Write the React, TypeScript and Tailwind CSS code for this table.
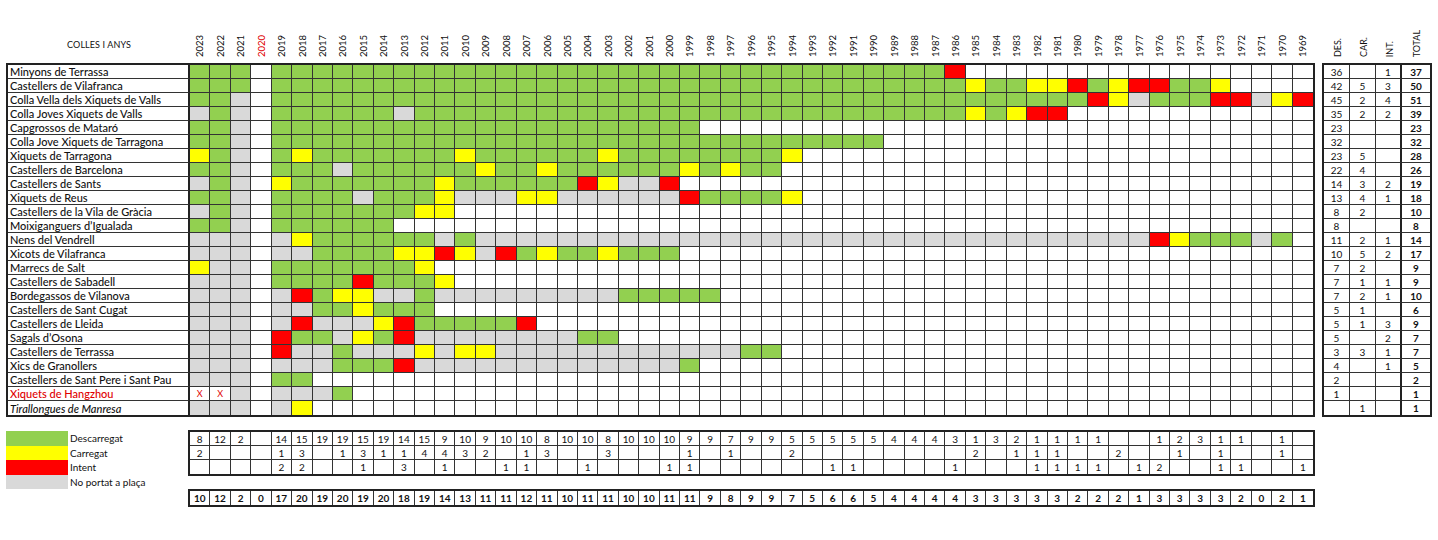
const YEARS = Array.from({ length: 55 }, (_, i) => 2023 - i);

const FILL: Record<string, string> = {
  G: "bg-[#92d050]",
  Y: "bg-[#ffff00]",
  R: "bg-[#ff0000]",
  S: "bg-[#d9d9d9]",
  W: "bg-white",
  X: "bg-white",
};

type Val = number | "";

type Colla = {
  name: string;
  cells: string;
  stats: Val[];
  nameClass?: string;
};

// one letter per year, 2023 -> 1969, grouped by five
const row = (s: string) => s.replace(/ /g, "").padEnd(55, "W");

const colles: Colla[] = [
  { name: "Minyons de Terrassa", cells: row("GGGWG GGGGG GGGGG GGGGG GGGGG GGGGG GGGGG GGRWW"), stats: [36, "", 1, 37] },
  { name: "Castellers de Vilafranca", cells: row("GGGWG GGGGG GGGGG GGGGG GGGGG GGGGG GGGGG GGGYG GYYRG YRRGG YWWWW"), stats: [42, 5, 3, 50] },
  { name: "Colla Vella dels Xiquets de Valls", cells: row("GGSWG GGGGG GGGGG GGGGG GGGGG GGGGG GGGGG GGGGG GGGGR YSGGG RRSYR"), stats: [45, 2, 4, 51] },
  { name: "Colla Joves Xiquets de Valls", cells: row("SGSWG GGGGG SGGGG GGGGG GGGGG GGGGG GGGGG GGGYG YRRWW"), stats: [35, 2, 2, 39] },
  { name: "Capgrossos de Mataró", cells: row("GGSWG GGGGG GGGGG GGGGG GGGGG"), stats: [23, "", "", 23] },
  { name: "Colla Jove Xiquets de Tarragona", cells: row("GGSWG GGGGG GGGGG GGGGG GGGGG GGGGG GGGGW"), stats: [32, "", "", 32] },
  { name: "Xiquets de Tarragona", cells: row("YGSWG YGGGG GGGYG GGGGG YGGGG GGGGY"), stats: [23, 5, "", 28] },
  { name: "Castellers de Barcelona", cells: row("GGSWG GGSGG GGGGY GGYGG GGGGY GYGGW"), stats: [22, 4, "", 26] },
  { name: "Castellers de Sants", cells: row("SGSWY GGGGG GGYGG GGGGR YSSRW"), stats: [14, 3, 2, 19] },
  { name: "Xiquets de Reus", cells: row("GGSWG GGGSG GGYSS SYYSS SSSSR GGGGY"), stats: [13, 4, 1, 18] },
  { name: "Castellers de la Vila de Gràcia", cells: row("SGSWG GGGGG GYYWW"), stats: [8, 2, "", 10] },
  { name: "Moixiganguers d’Igualada", cells: row("GGSWG GGGGG"), stats: [8, "", "", 8] },
  { name: "Nens del Vendrell", cells: row("SSSWS YGGGG GGSGS SSSSS SSSSS SSSSS SSSSS SSSSS SSSSS SSRYG GGSGW"), stats: [11, 2, 1, 14] },
  { name: "Xicots de Vilafranca", cells: row("SSSWS SGGGG YYRYS RGYGG YGGGW"), stats: [10, 5, 2, 17] },
  { name: "Marrecs de Salt", cells: row("YSSWG GGGGG GYWWW"), stats: [7, 2, "", 9] },
  { name: "Castellers de Sabadell", cells: row("SSSWG GGGRG GGYWW"), stats: [7, 1, 1, 9] },
  { name: "Bordegassos de Vilanova", cells: row("SSSWS RGYYS SGSSS SSSSS SGGGG GWWWW"), stats: [7, 2, 1, 10] },
  { name: "Castellers de Sant Cugat", cells: row("SSSWS SGGYG GGWWW"), stats: [5, 1, "", 6] },
  { name: "Castellers de Lleida", cells: row("SSSWS RSSSY RGGGG GRWWW"), stats: [5, 1, 3, 9] },
  { name: "Sagals d’Osona", cells: row("SSSWR GGSYG RSSSS SSSSG GWWWW"), stats: [5, "", 2, 7] },
  { name: "Castellers de Terrassa", cells: row("SSSWR SSGSS SYSYY SSSSS SSSSS SSGGW"), stats: [3, 3, 1, 7] },
  { name: "Xics de Granollers", cells: row("SSSWS SSGGG RSSSS SSSSS SSSSG"), stats: [4, "", 1, 5] },
  { name: "Castellers de Sant Pere i Sant Pau", cells: row("SSSWG GWWWW"), stats: [2, "", "", 2] },
  { name: "Xiquets de Hangzhou", cells: row("XXSWS SSGWW"), stats: [1, "", "", 1], nameClass: "text-[#e00000]" },
  { name: "Tirallongues de Manresa", cells: row("SSSWS YWWWW"), stats: ["", 1, "", 1], nameClass: "italic" },
];

const descarregat: Val[] = [
  8, 12, 2, "", 14, 15, 19, 19, 15, 19, 14, 15, 9, 10, 9, 10, 10, 8, 10, 10, 8, 10, 10, 10, 9, 9, 7, 9, 9, 5,
  5, 5, 5, 5, 4, 4, 4, 3, 1, 3, 2, 1, 1, 1, 1, "", "", 1, 2, 3, 1, 1, "", 1, "",
];
const carregat: Val[] = [
  2, "", "", "", 1, 3, "", 1, 3, 1, 1, 4, 4, 3, 2, "", 1, 3, "", "", 3, "", "", "", 1, "", 1, "", "", 2,
  "", "", "", "", "", "", "", "", 2, "", 1, 1, 1, "", "", 2, "", "", 1, "", 1, "", "", 1, "",
];
const intent: Val[] = [
  "", "", "", "", 2, 2, "", "", 1, "", 3, "", 1, "", "", 1, 1, "", "", 1, "", "", "", 1, 1, "", "", "", "", "",
  "", 1, 1, "", "", "", "", 1, "", "", "", 1, 1, 1, 1, "", 1, 2, "", "", 1, 1, "", "", 1,
];
const totals: Val[] = [
  10, 12, 2, 0, 17, 20, 19, 20, 19, 20, 18, 19, 14, 13, 11, 11, 12, 11, 10, 11, 11, 10, 10, 11, 11, 9, 8, 9, 9, 7,
  5, 6, 6, 5, 4, 4, 4, 4, 3, 3, 3, 3, 3, 2, 2, 2, 1, 3, 3, 3, 3, 2, 0, 2, 1,
];

const legend = [
  { label: "Descarregat", color: "bg-[#92d050]" },
  { label: "Carregat", color: "bg-[#ffff00]" },
  { label: "Intent", color: "bg-[#ff0000]" },
  { label: "No portat a plaça", color: "bg-[#d9d9d9]" },
];

const GRID = "grid grid-cols-[182px_repeat(55,minmax(0,1fr))]";

function Vertical({ text, className = "" }: { text: string; className?: string }) {
  return <span className={`[writing-mode:vertical-rl] rotate-180 leading-none ${className}`}>{text}</span>;
}

function NumberStrip({ values, bold = false, last = false }: { values: Val[]; bold?: boolean; last?: boolean }) {
  return (
    <div className={`grid grid-cols-[repeat(55,minmax(0,1fr))] h-[14px] ${last ? "" : "border-b border-[#333]"}`}>
      {values.map((v, i) => (
        <div
          key={i}
          className={`flex items-center justify-center text-[10px] leading-none ${bold ? "font-bold" : ""} ${
            i < 54 ? "border-r border-[#333]" : ""
          }`}
        >
          {v}
        </div>
      ))}
    </div>
  );
}

export default function App() {
  return (
    <div className="w-[1438px] h-[540px] overflow-hidden bg-white text-[#111] [font-family:Lato,sans-serif]">
      <div className="flex pl-[6px]">
        {/* colles x anys */}
        <div className="w-[1309px]">
          <div className={`${GRID} h-[63px] px-[2px]`}>
            <div className="flex items-center justify-center pt-[27px] text-[9px] tracking-[0.1px]">COLLES I ANYS</div>
            {YEARS.map((y) => (
              <div key={y} className="flex items-end justify-center pb-[6px]">
                <Vertical text={String(y)} className={`text-[9.5px] ${y === 2020 ? "text-[#e00000]" : ""}`} />
              </div>
            ))}
          </div>
          <div className="border-2 border-[#222]">
            {colles.map((c, r) => (
              <div key={c.name} className={`${GRID} h-[14px]`}>
                <div
                  className={`flex items-center pl-[2px] border-r-2 border-[#222] text-[11px] font-medium leading-none whitespace-nowrap overflow-hidden ${
                    r < 24 ? "border-b border-b-[#333]" : ""
                  } ${c.nameClass ?? ""}`}
                >
                  {c.name}
                </div>
                {c.cells.split("").map((k, i) => (
                  <div
                    key={i}
                    className={`${FILL[k]} flex items-center justify-center ${i < 54 ? "border-r" : ""} ${
                      r < 24 ? "border-b" : ""
                    } border-[#333]`}
                  >
                    {k === "X" && <span className="text-[9px] leading-none text-[#e00000]">X</span>}
                  </div>
                ))}
              </div>
            ))}
          </div>
        </div>

        {/* resum */}
        <div className="ml-[7px] w-[110px]">
          <div className="grid grid-cols-[26px_26px_26px_1fr] h-[63px] px-[2px]">
            {["DES.", "CAR.", "INT.", "TOTAL"].map((h) => (
              <div key={h} className="flex items-end justify-center pb-[6px]">
                <Vertical text={h} className="text-[9px]" />
              </div>
            ))}
          </div>
          <div className="border-2 border-[#222]">
            {colles.map((c, r) => (
              <div key={c.name} className="grid grid-cols-[26px_26px_26px_1fr] h-[14px]">
                {c.stats.map((v, i) => (
                  <div
                    key={i}
                    className={`flex items-center justify-center text-[10px] leading-none ${i < 3 ? "border-r" : "font-bold"} ${
                      i === 2 ? "border-r-2 border-r-[#222]" : ""
                    } ${r < 24 ? "border-b" : ""} border-[#333]`}
                  >
                    {v}
                  </div>
                ))}
              </div>
            ))}
          </div>
        </div>
      </div>

      {/* llegenda i recomptes */}
      <div className="flex pl-[6px] pt-[13px]">
        <div className="w-[182px] pt-[1px]">
          {legend.map((l) => (
            <div key={l.label} className="flex items-center h-[14.5px]">
              <div className={`${l.color} w-[62px] h-full`} />
              <span className="ml-[2px] text-[10px] leading-none">{l.label}</span>
            </div>
          ))}
        </div>
        <div className="w-[1127px]">
          <div className="border-2 border-[#222]">
            <NumberStrip values={descarregat} />
            <NumberStrip values={carregat} />
            <NumberStrip values={intent} last />
          </div>
          <div className="border-2 border-[#222] mt-[13px]">
            <NumberStrip values={totals} bold last />
          </div>
        </div>
      </div>
    </div>
  );
}
